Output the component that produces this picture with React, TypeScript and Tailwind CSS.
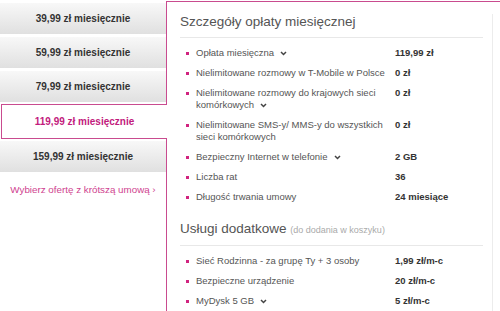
import React from "react";

const pink = "border-[#c94b8f]";

function Chevron() {
    return (
        <svg width="7" height="5" viewBox="0 0 7 5" className="inline-block ml-[6px] align-middle">
            <path d="M1 1 L3.5 3.5 L6 1" fill="none" stroke="#444" strokeWidth="1.5" />
        </svg>
    );
}

type Row = { label: React.ReactNode; value: string };

const details: Row[] = [
    { label: <>Opłata miesięczna<Chevron /></>, value: "119,99 zł" },
    { label: "Nielimitowane rozmowy w T-Mobile w Polsce", value: "0 zł" },
    { label: <>Nielimitowane rozmowy do krajowych sieci komórkowych<Chevron /></>, value: "0 zł" },
    { label: "Nielimitowane SMS-y/ MMS-y do wszystkich sieci komórkowych", value: "0 zł" },
    { label: <>Bezpieczny Internet w telefonie<Chevron /></>, value: "2 GB" },
    { label: "Liczba rat", value: "36" },
    { label: "Długość trwania umowy", value: "24 miesiące" },
];

const extras: Row[] = [
    { label: "Sieć Rodzinna - za grupę Ty + 3 osoby", value: "1,99 zł/m-c" },
    { label: "Bezpieczne urządzenie", value: "20 zł/m-c" },
    { label: <>MyDysk 5 GB<Chevron /></>, value: "5 zł/m-c" },
];

function Rows({ rows }: { rows: Row[] }) {
    return (
        <ul className="flex flex-col gap-[8px]">
            {rows.map((r, i) => (
                <li key={i} className="flex items-start text-[9.5px] leading-[12px]">
                    <span className="w-[3px] h-[3px] bg-[#d1237f] ml-[6px] mt-[5px] shrink-0" />
                    <span className="ml-[7px] w-[192px] mr-[7px] text-[#555]">{r.label}</span>
                    <span className="font-bold text-[#333]">{r.value}</span>
                </li>
            ))}
        </ul>
    );
}

function PlanButton({ label, className = "" }: { label: string; className?: string }) {
    return (
        <div
            className={`h-[31px] flex items-center justify-center bg-linear-to-b from-[#f8f8f8] to-[#e0e0e0] text-[10px] font-bold text-[#333] ${className}`}
        >
            {label}
        </div>
    );
}

export default function App() {
    return (
        <div className="w-[500px] h-[311px] overflow-hidden bg-white pt-px flex font-['Liberation_Sans',Arial,sans-serif]">
            {/* lista ofert */}
            <div className="w-[166px] shrink-0 flex flex-col">
                <PlanButton label="39,99 zł miesięcznie" className="mt-[2px]" />
                <PlanButton label="59,99 zł miesięcznie" className="mt-[3px]" />
                <PlanButton label="79,99 zł miesięcznie" className="mt-[3px]" />
                <div
                    className={`relative z-10 mt-[2px] ml-px -mr-px h-[35px] bg-white border border-r-0 ${pink} flex items-center justify-center text-[10px] font-bold text-[#c21b7d]`}
                >
                    119,99 zł miesięcznie
                </div>
                <PlanButton label="159,99 zł miesięcznie" className="mt-[2px]" />
                <div className="mt-[11px] text-center text-[9.8px] leading-[14px] text-[#cf3f8f]">
                    Wybierz ofertę z krótszą umową ›
                </div>
            </div>

            {/* szczegóły */}
            <div className={`flex-1 border-t border-l ${pink} flex pl-[13px] pt-[12px]`}>
                <div className="w-[303px] shrink-0">
                    <h2 className="text-[13.5px] leading-[16px] text-[#555] pb-[7px] border-b border-[#e8e8e8]">
                        Szczegóły opłaty miesięcznej
                    </h2>
                    <div className="mt-[9px]">
                        <Rows rows={details} />
                    </div>

                    <h2 className="mt-[18px] text-[13.5px] leading-[16px] text-[#555] pb-[7px] border-b border-[#e8e8e8]">
                        Usługi dodatkowe <span className="text-[9px] text-[#aaa]">(do dodania w koszyku)</span>
                    </h2>
                    <div className="mt-[9px]">
                        <Rows rows={extras} />
                    </div>
                </div>
                <div className="ml-[9px] border-l border-[#ececec]" />
            </div>
        </div>
    );
}
